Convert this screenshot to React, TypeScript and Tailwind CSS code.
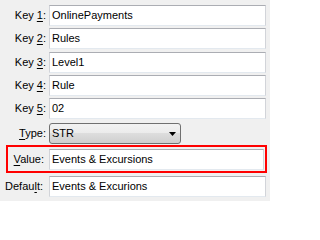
import React from "react";

const font = { fontFamily: '"Liberation Sans", Arial, sans-serif' };

function Label({ pre, u, post, w = "w-[46px]" }: { pre: string; u: string; post: string; w?: string }) {
  return (
    <div className={`${w} h-[21px] shrink-0 flex items-center justify-end text-[11px] leading-none text-black whitespace-pre`}>
      <span>
        {pre}
        <span className="underline underline-offset-[2px]">{u}</span>
        {post}
      </span>
    </div>
  );
}

function TextBox({ value, w = "w-[217px]" }: { value: string; w?: string }) {
  return (
    <div
      className={`${w} h-[21px] shrink-0 bg-white border border-t-[#abadb3] border-l-[#d2d4d9] border-r-[#d2d4d9] border-b-[#e3e9ef] flex items-center pl-[2px] text-[11px] text-black whitespace-pre`}
    >
      {value}
    </div>
  );
}

function Row({ n, value, mt }: { n: string; value: string; mt: string }) {
  return (
    <div className={`flex items-center h-[21px] ${mt}`}>
      <Label pre="Key " u={n} post=":" />
      <div className="w-[3px] shrink-0" />
      <TextBox value={value} />
    </div>
  );
}

export default function App() {
  return (
    <div className="w-[270px] h-[201px] bg-[#f0f0f0] pt-[5px] overflow-hidden" style={font}>
      <Row n="1" value="OnlinePayments" mt="mt-0" />
      <Row n="2" value="Rules" mt="mt-[2px]" />
      <Row n="3" value="Level1" mt="mt-[3px]" />
      <Row n="4" value="Rule" mt="mt-[2px]" />
      <Row n="5" value="02" mt="mt-[2px]" />

      <div className="flex items-center h-[21px] mt-[4px]">
        <Label pre="" u="T" post="ype:" />
        <div className="w-[3px] shrink-0" />
        <div className="w-[132px] h-[21px] rounded-[3px] border border-[#707070] bg-[linear-gradient(to_bottom,#f2f2f2_0%,#ebebeb_50%,#dddddd_50%,#cfcfcf_100%)] flex items-center pl-[2px] pr-[4px] text-[11px] text-black">
          <span className="flex-1">STR</span>
          <svg width="7" height="4" viewBox="0 0 7 4" className="mt-[1px]">
            <polygon points="0,0 7,0 3.5,4" fill="#000" />
          </svg>
        </div>
      </div>

      <div className="ml-[6px] mt-[1px] w-[261px] h-[28px] border-2 border-[#ff0000] pt-[2px] flex items-start">
        <Label pre="" u="V" post="alue:" w="w-[36px]" />
        <div className="w-[5px] shrink-0" />
        <TextBox value="Events & Excursions" w="w-[215px]" />
      </div>

      <div className="flex items-center h-[21px] mt-[3px]">
        <Label pre="Defau" u="l" post="t:" w="w-[43px]" />
        <div className="w-[6px] shrink-0" />
        <TextBox value="Events & Excurions" />
      </div>
    </div>
  );
}
